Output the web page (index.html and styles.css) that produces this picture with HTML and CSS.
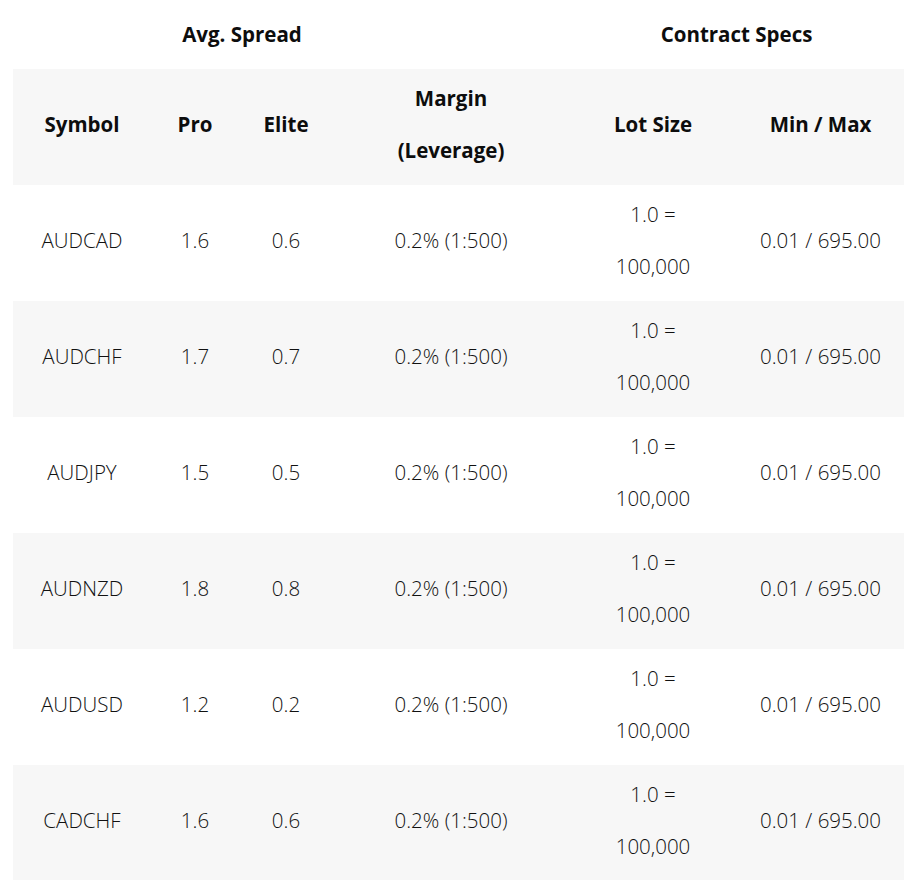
FILE: index.html
```html
<!DOCTYPE html>
<html lang="en">
<head>
<meta charset="utf-8">
<title>Spreads</title>
<link rel="stylesheet" href="styles.css">
</head>
<body>
<div class="wrap">
<table class="specs">
  <colgroup>
    <col class="c-sym"><col class="c-pro"><col class="c-elite"><col class="c-margin"><col class="c-lot"><col class="c-minmax">
  </colgroup>
  <thead>
    <tr class="group">
      <th></th>
      <th colspan="2">Avg. Spread</th>
      <th></th>
      <th colspan="2">Contract Specs</th>
    </tr>
    <tr class="head">
      <th>Symbol</th>
      <th>Pro</th>
      <th>Elite</th>
      <th>Margin<br>(Leverage)</th>
      <th>Lot Size</th>
      <th>Min / Max</th>
    </tr>
  </thead>
  <tbody>
    <tr><td>AUDCAD</td><td>1.6</td><td>0.6</td><td>0.2% (1:500)</td><td>1.0 =<br>100,000</td><td>0.01 / 695.00</td></tr>
    <tr><td>AUDCHF</td><td>1.7</td><td>0.7</td><td>0.2% (1:500)</td><td>1.0 =<br>100,000</td><td>0.01 / 695.00</td></tr>
    <tr><td>AUDJPY</td><td>1.5</td><td>0.5</td><td>0.2% (1:500)</td><td>1.0 =<br>100,000</td><td>0.01 / 695.00</td></tr>
    <tr><td>AUDNZD</td><td>1.8</td><td>0.8</td><td>0.2% (1:500)</td><td>1.0 =<br>100,000</td><td>0.01 / 695.00</td></tr>
    <tr><td>AUDUSD</td><td>1.2</td><td>0.2</td><td>0.2% (1:500)</td><td>1.0 =<br>100,000</td><td>0.01 / 695.00</td></tr>
    <tr><td>CADCHF</td><td>1.6</td><td>0.6</td><td>0.2% (1:500)</td><td>1.0 =<br>100,000</td><td>0.01 / 695.00</td></tr>
  </tbody>
</table>
</div>
</body>
</html>
```

FILE: styles.css
```css
html, body {
  margin: 0;
  padding: 0;
  background: #ffffff;
}
body {
  font-family: "Open Sans", "Noto Sans", "Liberation Sans", sans-serif;
  color: #111111;
}
.wrap {
  padding: 0 11px 0 13px;
}
.specs {
  width: 891px;
  border-collapse: collapse;
  table-layout: fixed;
  font-size: 20.5px;
  line-height: 52px;
}
.c-sym { width: 138px; }
.c-pro { width: 88px; }
.c-elite { width: 94px; }
.c-margin { width: 236px; }
.c-lot { width: 168px; }
.c-minmax { width: 167px; }
.specs th,
.specs td {
  text-align: center;
  vertical-align: middle;
  padding: 3px 0 9px;
}
.specs th {
  font-weight: 700;
  color: #0d0d0d;
}
.group th {
  height: 63px;
  padding: 3px 0 3px;
  line-height: 63px;
  background: #ffffff;
}
.head th {
  background: #f7f7f7;
}
.specs td {
  font-weight: 300;
  height: 104px;
}
.specs tbody tr:nth-child(even) td {
  background: #f7f7f7;
}
```
